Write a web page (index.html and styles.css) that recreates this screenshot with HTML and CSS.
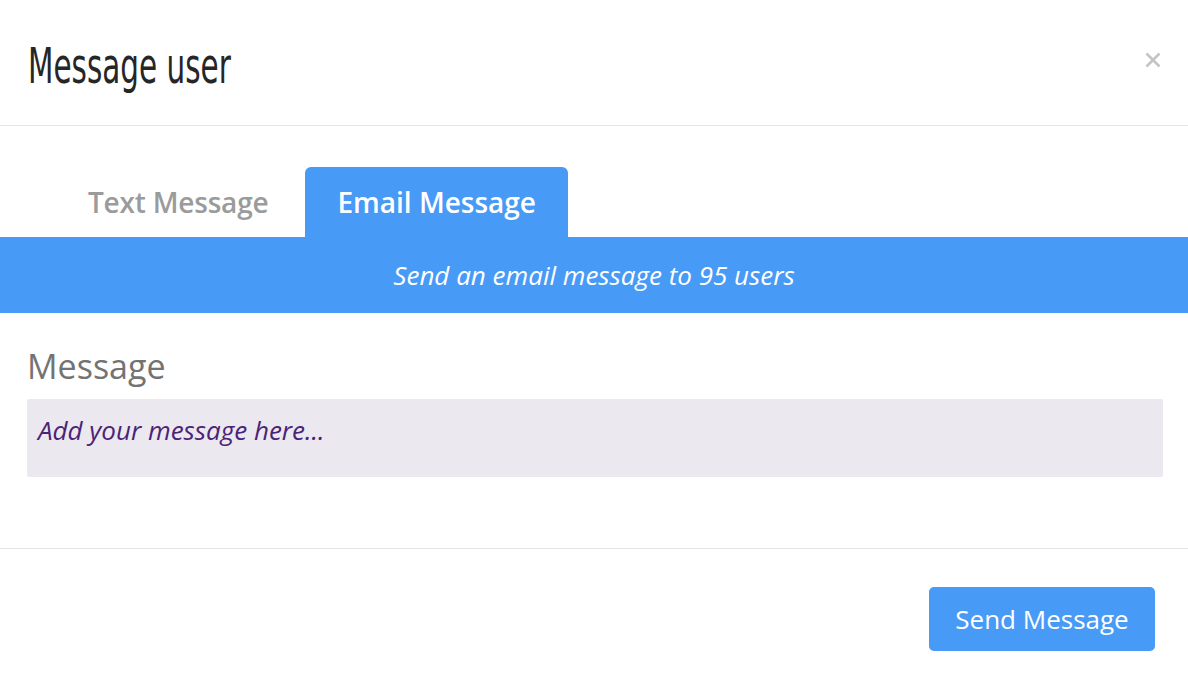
FILE: index.html
```html
<!DOCTYPE html>
<html>
<head>
<meta charset="utf-8">
<link rel="stylesheet" href="styles.css">
</head>
<body>
<div class="modal">
  <div class="modal-header">
    <h1 class="title">Message user</h1>
    <button class="close" aria-label="Close">
      <svg width="16" height="16" viewBox="0 0 16 16"><path d="M1.5 1.5 L14.5 14.5 M14.5 1.5 L1.5 14.5" stroke="#c4c4c4" stroke-width="2.6" stroke-linecap="butt"/></svg>
    </button>
  </div>
  <div class="tabs">
    <div class="tab">Text Message</div>
    <div class="tab active">Email Message</div>
  </div>
  <div class="band">Send an email message to 95 users</div>
  <div class="modal-body">
    <label class="label">Message</label>
    <div class="textarea">Add your message here...</div>
  </div>
  <div class="modal-footer">
    <button class="btn">Send Message</button>
  </div>
</div>
</body>
</html>
```
FILE: styles.css
```css
html, body {
  margin: 0;
  padding: 0;
  background: #fff;
}
body {
  font-family: "Open Sans", "Liberation Sans", sans-serif;
  width: 1188px;
  height: 682px;
  overflow: hidden;
}
.modal {
  display: flex;
  flex-direction: column;
}
.modal-header {
  height: 126px;
  border-bottom: 1px solid #e6e6e6;
  display: flex;
  align-items: center;
  justify-content: space-between;
  padding: 0 27px 0 28px;
  box-sizing: border-box;
}
.title {
  margin: 0;
  font-family: "Liberation Sans Narrow", "DejaVu Sans Condensed", sans-serif;
  font-weight: 400;
  font-size: 50px;
  color: #262626;
  display: inline-block;
  transform: scaleX(0.655);
  transform-origin: left center;
  line-height: 1;
  margin-top: 6px;
  letter-spacing: 0;
}
.close {
  background: none;
  border: 0;
  padding: 0;
  width: 16px;
  height: 16px;
  margin-top: -6px;
  display: flex;
}
.tabs {
  display: flex;
  gap: 4px;
  padding: 41px 0 0 54px;
}
.tab {
  height: 70px;
  padding: 0 32px;
  display: flex;
  align-items: center;
  font-size: 28px;
  font-weight: 600;
  color: #9b9b9b;
  border-radius: 6px 6px 0 0;
}
.tab:first-child {
  padding: 0 33px 0 34px;
  letter-spacing: -0.2px;
}
.tab.active {
  background: #479af6;
  color: #fff;
}
.band {
  background: #479af6;
  height: 76px;
  display: flex;
  align-items: center;
  justify-content: center;
  color: #fff;
  font-style: italic;
  font-size: 26px;
}
.modal-body {
  padding: 30px 25px 71px 27px;
  display: flex;
  flex-direction: column;
  border-bottom: 1px solid #e3e3e3;
}
.label {
  font-size: 34px;
  color: #737373;
  line-height: 46px;
  margin-bottom: 10px;
}
.textarea {
  background: #ebe8f0;
  height: 78px;
  border-radius: 2px;
  box-sizing: border-box;
  padding: 11px 11px;
  font-style: italic;
  font-size: 26px;
  color: #4b2377;
  line-height: 40px;
}
.modal-footer {
  display: flex;
  justify-content: flex-end;
  padding: 38px 33px 0 0;
}
.btn {
  background: #479af6;
  border: 0;
  border-radius: 5px;
  color: #fff;
  font-family: "Open Sans", "Liberation Sans", sans-serif;
  font-size: 26px;
  width: 226px;
  height: 64px;
  padding: 0;
}
```
